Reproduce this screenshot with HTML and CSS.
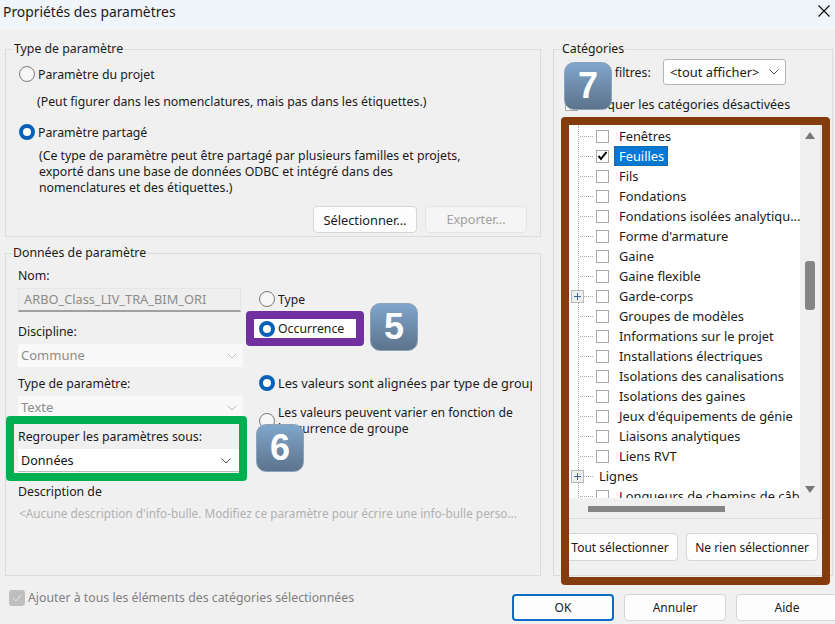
FILE: index.html
```html
<!DOCTYPE html>
<html lang="fr">
<head>
	<meta charset="UTF-8">
	<title>Propriétés des paramètres</title>
	<link rel="stylesheet" href="styles.css">
</head>
<body>
	<div class="dialog">
		<header class="titlebar">
			<span>Propriétés des paramètres</span>
			<svg class="close" width="12" height="12" viewBox="0 0 12 12"><path d="M.5.5l11 11M11.5.5l-11 11" stroke="#111" stroke-width="1.2" fill="none"/></svg>
		</header>

		<div class="main">
			<div class="left">
				<fieldset class="group group-type">
					<legend>Type de paramètre</legend>
					<div class="radio-row"><i class="radio"></i>Paramètre du projet</div>
					<p class="note note-one">(Peut figurer dans les nomenclatures, mais pas dans les étiquettes.)</p>
					<div class="radio-row row-shared"><i class="radio on"></i>Paramètre partagé</div>
					<p class="note note-two">(Ce type de paramètre peut être partagé par plusieurs familles et projets,<br>exporté dans une base de données ODBC et intégré dans des<br>nomenclatures et des étiquettes.)</p>
					<div class="group-buttons">
						<button class="btn btn-select">Sélectionner...</button>
						<button class="btn btn-export" disabled>Exporter...</button>
					</div>
				</fieldset>

				<fieldset class="group group-data">
					<legend>Données de paramètre</legend>
					<div class="data-cols">
						<div class="data-left">
							<div class="label">Nom:</div>
							<div class="input">ARBO_Class_LIV_TRA_BIM_ORI</div>
							<div class="label label-discipline">Discipline:</div>
							<div class="select off">Commune<svg class="chev" width="10" height="6" viewBox="0 0 10 6"><path d="M.5.5L5 5 9.5.5" stroke="#bbb" fill="none"/></svg></div>
							<div class="label label-type">Type de paramètre:</div>
							<div class="select off">Texte<svg class="chev" width="10" height="6" viewBox="0 0 10 6"><path d="M.5.5L5 5 9.5.5" stroke="#bbb" fill="none"/></svg></div>
							<div class="label label-group">Regrouper les paramètres sous:</div>
							<div class="select on-white">Données<svg class="chev" width="10" height="6" viewBox="0 0 10 6"><path d="M.5.5L5 5 9.5.5" stroke="#555" fill="none"/></svg></div>
						</div>
						<div class="data-right">
							<div class="radio-row"><i class="radio"></i>Type</div>
							<div class="radio-row row-occ"><i class="radio on"></i>Occurrence</div>
							<div class="radio-row row-aligned"><i class="radio on"></i><span class="nowrap">Les valeurs sont alignées par type de groupe</span></div>
							<div class="radio-row row-vary"><i class="radio"></i><span>Les valeurs peuvent varier en fonction de<br>l'occurrence de groupe</span></div>
						</div>
					</div>
					<div class="label label-desc">Description de</div>
					<div class="placeholder">&lt;Aucune description d'info-bulle. Modifiez ce paramètre pour écrire une info-bulle perso...</div>
				</fieldset>

				<div class="add-all"><i class="check-off"><svg width="10" height="8" viewBox="0 0 10 8"><path d="M1 4l3 3 5-6" stroke="#e4e4e4" fill="none"/></svg></i>Ajouter à tous les éléments des catégories sélectionnées</div>
			</div>

			<fieldset class="group group-cat">
				<legend>Catégories</legend>
				<div class="filter-row">
					<span class="filter-label">Liste de filtres:</span>
					<div class="select filter-select">&lt;tout afficher&gt;<svg class="chev" width="10" height="6" viewBox="0 0 10 6"><path d="M.5.5L5 5 9.5.5" stroke="#555" fill="none"/></svg></div>
				</div>
				<div class="hide-row"><i class="box"></i>Masquer les catégories désactivées</div>

				<div class="tree-box">
					<div class="tree-wrap">
						<ul class="tree">
							<li><i class="box"></i><span>Fenêtres</span></li>
							<li><i class="box"><svg width="11" height="10" viewBox="0 0 11 10"><path d="M1.5 5L4 8l5.5-7" stroke="#000" stroke-width="2" fill="none"/></svg></i><span class="sel">Feuilles</span></li>
							<li><i class="box"></i><span>Fils</span></li>
							<li><i class="box"></i><span>Fondations</span></li>
							<li><i class="box"></i><span>Fondations isolées analytiqu...</span></li>
							<li><i class="box"></i><span>Forme d'armature</span></li>
							<li><i class="box"></i><span>Gaine</span></li>
							<li><i class="box"></i><span>Gaine flexible</span></li>
							<li><b class="plus"></b><i class="box"></i><span>Garde-corps</span></li>
							<li><i class="box"></i><span>Groupes de modèles</span></li>
							<li><i class="box"></i><span>Informations sur le projet</span></li>
							<li><i class="box"></i><span>Installations électriques</span></li>
							<li><i class="box"></i><span>Isolations des canalisations</span></li>
							<li><i class="box"></i><span>Isolations des gaines</span></li>
							<li><i class="box"></i><span>Jeux d'équipements de génie</span></li>
							<li><i class="box"></i><span>Liaisons analytiques</span></li>
							<li><i class="box"></i><span>Liens RVT</span></li>
							<li class="parent"><b class="plus"></b><span>Lignes</span></li>
							<li><i class="box"></i><span>Longueurs de chemins de câb</span></li>
						</ul>
						<div class="vscroll">
							<svg width="10" height="7" viewBox="0 0 10 7"><path d="M5 0l5 7H0z" fill="#777"/></svg>
							<div class="vthumb"></div>
							<svg width="10" height="7" viewBox="0 0 10 7"><path d="M0 0h10L5 7z" fill="#777"/></svg>
						</div>
					</div>
					<div class="hscroll"><div class="hthumb"></div></div>
				</div>
				<div class="tree-buttons">
					<button class="btn btn-all">Tout sélectionner</button>
					<button class="btn btn-none">Ne rien sélectionner</button>
				</div>
			</fieldset>
		</div>

		<div class="footer">
			<button class="btn btn-ok">OK</button>
			<button class="btn btn-foot">Annuler</button>
			<button class="btn btn-foot">Aide</button>
		</div>

		<!-- annotations over the dialog -->
		<div class="frame frame-purple"></div>
		<div class="frame frame-green"></div>
		<div class="frame frame-brown"></div>
		<div class="badge badge-5">5</div>
		<div class="badge badge-6">6</div>
		<div class="badge badge-7">7</div>
	</div>
</body>
</html>
```

FILE: styles.css
```css
* {
	box-sizing: border-box;
}

body {
	margin: 0;
	font-family: "Noto Sans", "Open Sans", sans-serif;
	font-size: 12.3px;
	color: #1a1a1a;
}

.dialog {
	position: relative;
	width: 835px;
	height: 624px;
	overflow: hidden;
	background: #f0f0f0;
}

.titlebar {
	display: flex;
	justify-content: space-between;
	align-items: center;
	height: 30px;
	padding: 0 5px 8px 3px;
	background: #eff5f9;
	font-size: 13.85px;
}

.main {
	display: flex;
	gap: 12px;
	height: 564px;
	padding: 11px 0 0 5px;
}

.left {
	flex: none;
	width: 536px;
}

.group {
	margin: 0;
	padding: 0;
	border: 1px solid #dcdcdc;
	min-width: 0;
}

.group legend {
	margin-left: -6px;
	padding: 0 1px;
	line-height: 16px;
}

.group-type {
	height: 196px;
	padding: 9px 0 0 13px;
}

.group-data {
	height: 331px;
	margin-top: 8px;
	padding: 6px 0 0 12px;
}

.radio-row {
	display: flex;
	align-items: center;
	gap: 3px;
	height: 16px;
}

.radio {
	flex: none;
	width: 16px;
	height: 16px;
	border: 1px solid #7a7a7a;
	border-radius: 50%;
	background: #f6f6f6;
}

.radio.on {
	border: 4.5px solid #0460b8;
	background: #fff;
}

.note {
	margin: 0;
	line-height: 16px;
}

.note-one {
	margin: 12px 0 0 18px;
}

.row-shared {
	margin-top: 14px;
}

.note-two {
	margin: 8px 0 0 20px;
}

.group-buttons {
	display: flex;
	justify-content: flex-end;
	gap: 8px;
	margin: 10px 13px 0 0;
}

.btn {
	height: 27px;
	padding: 0;
	border: 1px solid #d6d6d6;
	border-radius: 4px;
	background: #fdfdfd;
	font: inherit;
	font-size: 12px;
	color: #1a1a1a;
}

.btn-select {
	width: 104px;
	font-size: 12.8px;
}

.btn-export {
	width: 102px;
	border-color: #e4e4e4;
	background: #f5f5f5;
	font-size: 12.6px;
	color: #a0a0a0;
}

.data-cols {
	display: flex;
}

.data-left {
	flex: none;
	width: 225px;
	padding-top: 1px;
}

.label {
	line-height: 16px;
}

.input {
	width: 223px;
	height: 24px;
	margin-top: 4px;
	padding-left: 5px;
	border: 1px solid #e6e6e6;
	border-bottom: 2px solid #a0a0a0;
	background: #eeeeee;
	font-size: 12.8px;
	line-height: 21px;
	color: #8c8c8c;
}

.label-discipline {
	margin-top: 12px;
}

.label-type {
	margin-top: 9px;
}

.label-group {
	margin-top: 10px;
	white-space: nowrap;
}

.select {
	position: relative;
	width: 225px;
	height: 23px;
	margin-top: 4px;
	padding-left: 3px;
	line-height: 23px;
}

.select.off {
	background: #f9f9f9;
	font-size: 13px;
	color: #8c8c8c;
}

.select.on-white {
	border-bottom: 1px solid #bbb;
	background: #fff;
	font-size: 12.6px;
	line-height: 24px;
	color: #111;
}

.chev {
	position: absolute;
	right: 6px;
	top: 9px;
}

.on-white .chev {
	right: 12px;
}

.data-right {
	width: 289px;
	padding: 24px 0 0 16px;
	overflow: hidden;
	font-size: 12.15px;
}

.nowrap {
	font-size: 12.7px;
	white-space: nowrap;
}

/* white patch inside the purple frame */
.row-occ {
	width: 102px;
	height: 19px;
	margin: 12px 0 0 -5px;
	padding-left: 5px;
	background: #fff;
	font-size: 12.3px;
}

.row-aligned {
	margin-top: 37px;
}

.row-vary {
	height: 32px;
	margin-top: 14px;
	line-height: 16px;
}

.label-desc {
	margin-top: 12px;
}

.placeholder {
	margin: 5px 0 0 1px;
	font-size: 11.8px;
	white-space: nowrap;
	color: #b0b0b0;
}

.add-all {
	display: flex;
	align-items: center;
	gap: 3px;
	margin: 13px 0 0 4px;
	color: #808080;
}

.check-off {
	display: flex;
	align-items: center;
	justify-content: center;
	width: 16px;
	height: 16px;
	border-radius: 3px;
	background: #bfbfbf;
}

.group-cat {
	flex: none;
	width: 280px;
	height: 535px;
}

.group-cat legend {
	margin-left: 7px;
}

.filter-row {
	display: flex;
	align-items: center;
	height: 26px;
	margin-top: 2px;
	padding-left: 13px;
}

.filter-label {
	width: 96px;
	white-space: nowrap;
}

.filter-select {
	width: 123px;
	height: 26px;
	margin: 0;
	padding-left: 6px;
	border: 1px solid #b5b5b5;
	border-radius: 3px;
	background: #fff;
	font-size: 12.9px;
	line-height: 24px;
}

.hide-row {
	display: flex;
	align-items: center;
	gap: 5px;
	height: 16px;
	margin-top: 11px;
	padding-left: 11px;
	font-size: 12.5px;
}

.box {
	position: relative;
	display: inline-flex;
	flex: none;
	align-items: center;
	justify-content: center;
	width: 13px;
	height: 13px;
	border: 1px solid #a8a8a8;
	background: #fff;
}

.tree-box {
	width: 252px;
	margin: 13px 0 0 15px;
	border-right: 1px solid #dcdcdc;
	border-bottom: 1px solid #dcdcdc;
}

.tree-wrap {
	display: flex;
	height: 373px;
}

.tree {
	flex: 1;
	margin: 0;
	padding: 1px 0 0;
	overflow: hidden;
	list-style: none;
	background: #fff repeating-linear-gradient(#a8a8a8 0 1px, #fff 1px 2px) 9px 0 / 1px 100% no-repeat;
	font-size: 12.85px;
}

.tree li {
	position: relative;
	display: flex;
	align-items: center;
	height: 20px;
	padding-left: 27px;
	white-space: nowrap;
}

/* dotted branch from the vertical line to the box */
.tree li::before {
	content: "";
	position: absolute;
	left: 11px;
	top: 10px;
	width: 13px;
	border-top: 1px dotted #a8a8a8;
}

.tree li .box {
	margin-right: 9px;
}

.tree li span {
	padding: 0 1px;
	line-height: 20px;
}

.tree li .sel {
	margin-left: -4px;
	padding: 0 4px 0 5px;
	outline: 1px dotted #555;
	outline-offset: -1px;
	background: #0078d7;
	color: #fff;
}

.tree .parent {
	padding-left: 29px;
}

.plus {
	position: absolute;
	z-index: 1;
	left: 2px;
	top: 4px;
	width: 13px;
	height: 13px;
	border: 1px solid #b8b8b8;
	background:
		linear-gradient(#3f5fa8, #3f5fa8) center / 7px 1px no-repeat,
		linear-gradient(#3f5fa8, #3f5fa8) center / 1px 7px no-repeat,
		#eeeeee;
}

.vscroll {
	display: flex;
	flex: none;
	flex-direction: column;
	align-items: center;
	width: 20px;
	padding-top: 7px;
	background: #f0f0f0;
}

.vthumb {
	width: 10px;
	height: 49px;
	margin: 122px 0 176px;
	border-radius: 3px;
	background: #858585;
}

.hscroll {
	height: 20px;
	padding: 8px 0 0 19px;
	background: #f0f0f0;
}

.hthumb {
	width: 137px;
	height: 6px;
	background: #858585;
}

.tree-buttons {
	display: flex;
	gap: 8px;
	margin: 14px 0 0 8px;
}

.btn-all {
	width: 116px;
	height: 28px;
}

.btn-none {
	width: 132px;
	height: 28px;
}

.footer {
	display: flex;
	justify-content: flex-end;
	gap: 10px;
	margin-right: -3px;
}

.btn-ok {
	width: 102px;
	border: 2px solid #0a6cc4;
}

.btn-foot {
	width: 102px;
}

/* coloured annotation frames */
.frame {
	position: absolute;
	border-style: solid;
	border-width: 8px;
	border-radius: 4px;
}

.frame-purple {
	left: 246px;
	top: 311px;
	width: 118px;
	height: 35px;
	border-color: #7030a0;
}

.frame-green {
	left: 6px;
	top: 416px;
	width: 241px;
	height: 65px;
	border-color: #00b050;
}

.frame-brown {
	left: 561px;
	top: 117px;
	width: 269px;
	height: 468px;
	border-color: #843c0c;
}

.badge {
	position: absolute;
	display: flex;
	align-items: center;
	justify-content: center;
	width: 48px;
	height: 48px;
	border: 1px solid #8ca4bb;
	border-radius: 10px;
	background: linear-gradient(#80a6cb, #5c738c);
	font-family: "Liberation Sans", sans-serif;
	font-size: 36px;
	font-weight: bold;
	color: #fff;
}

.badge-5 {
	left: 370px;
	top: 303px;
}

.badge-6 {
	left: 256px;
	top: 424px;
}

.badge-7 {
	left: 564px;
	top: 62px;
}
```
